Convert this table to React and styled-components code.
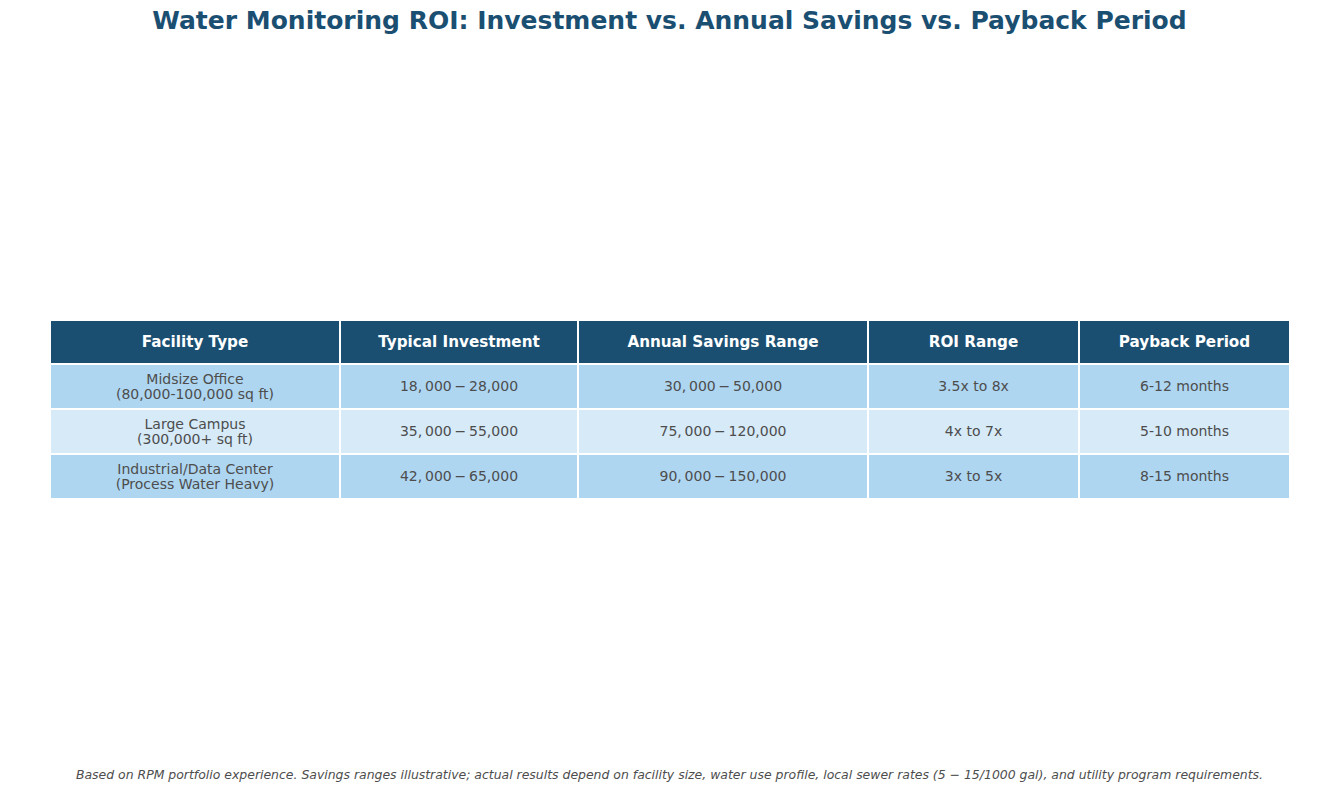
import React from 'react';
import styled, { createGlobalStyle } from 'styled-components';

const GlobalStyle = createGlobalStyle`
  html, body {
    margin: 0;
    padding: 0;
    background: #ffffff;
  }
  body {
    font-family: "DejaVu Sans", "Liberation Sans", sans-serif;
  }
`;

const columns = [
  { title: 'Facility Type', width: 290 },
  { title: 'Typical Investment', width: 238 },
  { title: 'Annual Savings Range', width: 290 },
  { title: 'ROI Range', width: 211 },
  { title: 'Payback Period', width: 211 },
];

const rows = [
  [
    ['Midsize Office', '(80,000-100,000 sq ft)'],
    '18,\u2009000\u2009\u2212\u200928,000',
    '30,\u2009000\u2009\u2212\u200950,000',
    '3.5x to 8x',
    '6-12 months',
  ],
  [
    ['Large Campus', '(300,000+ sq ft)'],
    '35,\u2009000\u2009\u2212\u200955,000',
    '75,\u2009000\u2009\u2212\u2009120,000',
    '4x to 7x',
    '5-10 months',
  ],
  [
    ['Industrial/Data Center', '(Process Water Heavy)'],
    '42,\u2009000\u2009\u2212\u200965,000',
    '90,\u2009000\u2009\u2212\u2009150,000',
    '3x to 5x',
    '8-15 months',
  ],
];

function App() {
  return (
    <Page>
      <GlobalStyle />
      <Title>Water Monitoring ROI: Investment vs. Annual Savings vs. Payback Period</Title>
      <TableArea>
        <RoiTable>
          <colgroup>
            {columns.map((c) => (
              <col key={c.title} style={{ width: c.width }} />
            ))}
          </colgroup>
          <thead>
            <tr>
              {columns.map((c) => (
                <HeadCell key={c.title}>{c.title}</HeadCell>
              ))}
            </tr>
          </thead>
          <tbody>
            {rows.map((row, i) => (
              <tr key={i}>
                {row.map((cell, j) => (
                  <BodyCell key={j} $alt={i % 2 === 1}>
                    {Array.isArray(cell) ? (
                      <>
                        {cell[0]}
                        <br />
                        {cell[1]}
                      </>
                    ) : (
                      cell
                    )}
                  </BodyCell>
                ))}
              </tr>
            ))}
          </tbody>
        </RoiTable>
      </TableArea>
      <Footnote>
        Based on RPM portfolio experience. Savings ranges illustrative; actual results depend on
        facility size, water use profile, local sewer rates (5 &minus; 15/1000 gal), and utility
        program requirements.
      </Footnote>
    </Page>
  );
}

const Page = styled.div`
  width: 1339px;
  height: 793px;
  display: flex;
  flex-direction: column;
  align-items: center;
  overflow: hidden;
`;

const Title = styled.h1`
  margin: 6px 0 0;
  font-size: 25px;
  line-height: 30px;
  font-weight: bold;
  color: #1b4f72;
  text-align: center;
`;

const TableArea = styled.div`
  flex: 1;
  display: flex;
  align-items: center;
  justify-content: center;
  padding-top: 16px;
`;

const RoiTable = styled.table`
  border-collapse: collapse;
  table-layout: fixed;
  width: 1242px;
  margin-left: 1px;
`;

const HeadCell = styled.th`
  height: 42px;
  padding: 0;
  background: #1b4f72;
  color: #ffffff;
  font-size: 15.2px;
  font-weight: bold;
  text-align: center;
  border: 2px solid #ffffff;
`;

const BodyCell = styled.td`
  height: 43px;
  padding: 0;
  background: ${(p) => (p.$alt ? '#d6eaf8' : '#aed6f1')};
  color: #4d4d4d;
  font-size: 14px;
  line-height: 15px;
  text-align: center;
  border: 2px solid #ffffff;
`;

const Footnote = styled.p`
  margin: 0 0 11px;
  font-size: 12.45px;
  font-style: italic;
  color: #4d4d4d;
  text-align: center;
  white-space: nowrap;
`;

export default App;
